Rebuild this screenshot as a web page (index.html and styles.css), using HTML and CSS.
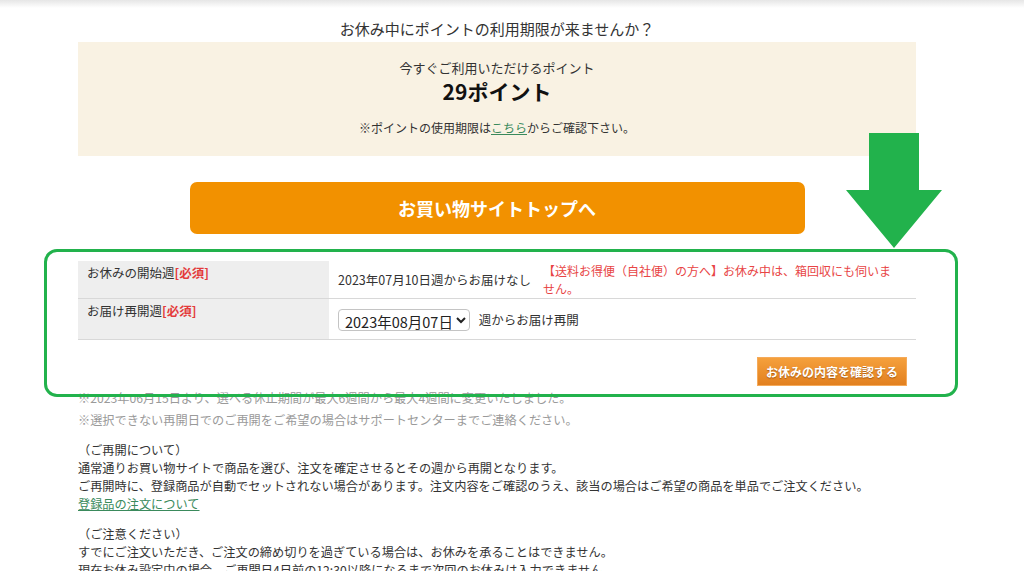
FILE: index.html
```html
<!DOCTYPE html>
<html lang="ja">
<head>
    <meta charset="UTF-8">
    <meta name="viewport" content="width=device-width, initial-scale=1.0">
    <title>お休み設定</title>
    <link rel="stylesheet" href="styles.css">
</head>
<body>

    <div class="topbar"></div>

    <main class="page">
        <p class="lead">お休み中にポイントの利用期限が来ませんか？</p>

        <!-- Points box -->
        <section class="points">
            <p class="points-label">今すぐご利用いただけるポイント</p>
            <p class="points-value">29ポイント</p>
            <p class="points-note">※ポイントの使用期限は<a href="#">こちら</a>からご確認下さい。</p>
        </section>

        <div class="shop-wrap">
            <a class="shop-btn" href="#">お買い物サイトトップへ</a>
        </div>

        <!-- Rest form -->
        <form class="rest-form">
            <table class="rest-table">
                <tr>
                    <th>お休みの開始週<span class="req">[必須]</span></th>
                    <td>
                        <div class="start-cell">
                            <span>2023年07月10日週からお届けなし</span>
                            <span class="warn">【送料お得便（自社便）の方へ】お休み中は、箱回収にも伺いません。</span>
                        </div>
                    </td>
                </tr>
                <tr>
                    <th>お届け再開週<span class="req">[必須]</span></th>
                    <td class="restart-cell">
                        <select class="week-select">
                            <option>2023年08月07日</option>
                            <option>2023年08月14日</option>
                            <option>2023年08月21日</option>
                        </select>
                        <span>週からお届け再開</span>
                    </td>
                </tr>
            </table>
            <div class="form-actions">
                <button type="button" class="confirm-btn">お休みの内容を確認する</button>
            </div>
        </form>

        <div class="notes">
            <p>※2023年06月15日より、選べる休止期間が最大6週間から最大4週間に変更いたしました。</p>
            <p>※選択できない再開日でのご再開をご希望の場合はサポートセンターまでご連絡ください。</p>
        </div>

        <div class="info">
            <p>（ご再開について）</p>
            <p>通常通りお買い物サイトで商品を選び、注文を確定させるとその週から再開となります。</p>
            <p>ご再開時に、登録商品が自動でセットされない場合があります。注文内容をご確認のうえ、該当の場合はご希望の商品を単品でご注文ください。</p>
            <p><a href="#">登録品の注文について</a></p>
        </div>

        <div class="info">
            <p>（ご注意ください）</p>
            <p>すでにご注文いただき、ご注文の締め切りを過ぎている場合は、お休みを承ることはできません。</p>
            <p>現在お休み設定中の場合、ご再開日4日前の12:30以降になるまで次回のお休みは入力できません。</p>
        </div>
    </main>

    <!-- Annotation overlay -->
    <div class="highlight"></div>
    <svg class="arrow" width="97" height="115" viewBox="0 0 97 115">
        <polygon points="23,0 73,0 73,57 96,57 48,115 0,57 23,57" fill="#22b24c"/>
    </svg>

</body>
</html>
```

FILE: styles.css
```css
/* Base */
body {
    margin: 0;
    font-family: "Noto Sans CJK JP", "Noto Sans", sans-serif;
    font-size: 12.2px;
    color: #333;
    background-color: #fff;
    position: relative;
    min-height: 571px;
    overflow: hidden;
}

p {
    margin: 0;
}

a {
    color: #3a8a5c;
}

.topbar {
    height: 8px;
    background: linear-gradient(#e6e6e6, #fff);
}

.page {
    width: 838px;
    margin-left: 78px;
    padding-top: 10px;
}

.lead {
    text-align: center;
    font-size: 15px;
    line-height: 22px;
}

/* Points box */
.points {
    margin-top: 2px;
    background-color: #f9f2e3;
    text-align: center;
    padding: 17px 0 19px;
}

.points-label {
    font-size: 13px;
    line-height: 18px;
}

.points-value {
    font-size: 21px;
    font-weight: bold;
    line-height: 28px;
    color: #111;
}

.points-note {
    margin-top: 14px;
    font-size: 12px;
    line-height: 18px;
}

/* Shop button */
.shop-wrap {
    display: flex;
    justify-content: center;
    margin-top: 26px;
}

.shop-btn {
    width: 615px;
    height: 52px;
    line-height: 52px;
    background-color: #f29100;
    border-radius: 7px;
    color: #fff;
    font-size: 18px;
    font-weight: bold;
    text-align: center;
    text-decoration: none;
}

/* Form table */
.rest-form {
    margin-top: 27px;
}

.rest-table {
    width: 100%;
    border-collapse: collapse;
    font-size: 12.5px;
}

.rest-table tr {
    border-bottom: 1px solid #d8d8d8;
}

.rest-table th {
    width: 251px;
    box-sizing: border-box;
    background-color: #eee;
    font-weight: normal;
    text-align: left;
    vertical-align: top;
    padding: 3px 9px 0;
    line-height: 18px;
}

.rest-table td {
    padding: 1px 24px 1px 9px;
    vertical-align: middle;
}

.req {
    color: #e33b3b;
    font-weight: bold;
}

.start-cell {
    display: flex;
    align-items: center;
}

.start-cell .warn {
    flex: 1;
    margin-left: 12px;
    color: #e84545;
    font-size: 12px;
    line-height: 17.5px;
}

.rest-table td.restart-cell {
    padding-top: 9px;
    padding-bottom: 8px;
}

.week-select {
    height: 22px;
    width: 132px;
    font-family: "Noto Sans CJK JP", sans-serif;
    font-size: 14.5px;
    color: #222;
    border: 1px solid #c4c4c4;
    border-radius: 4px;
    background-color: #fff;
    padding: 0 2px;
    vertical-align: middle;
}

.restart-cell span {
    margin-left: 6px;
    vertical-align: middle;
}

.form-actions {
    display: flex;
    justify-content: flex-end;
    margin-top: 17px;
    padding-right: 9px;
}

.confirm-btn {
    height: 29px;
    padding: 0 8px;
    font-family: "Noto Sans CJK JP", sans-serif;
    font-size: 12px;
    font-weight: bold;
    color: #fff;
    text-shadow: 0 1px 1px rgba(120, 60, 0, 0.6);
    background: linear-gradient(#f5a03c, #e2801f);
    border: 1px solid #f5aa5a;
    cursor: pointer;
}

/* Notes */
.notes {
    margin-top: 1px;
    color: #9a9a9a;
    line-height: 22px;
}

.info {
    margin-top: 10px;
    line-height: 18px;
}

.info + .info {
    margin-top: 12px;
}

/* Annotation */
.highlight {
    position: absolute;
    left: 44px;
    top: 249px;
    width: 914px;
    height: 148px;
    box-sizing: border-box;
    border: 3px solid #22b24c;
    border-radius: 13px;
}

.arrow {
    position: absolute;
    left: 846px;
    top: 133px;
}
```
